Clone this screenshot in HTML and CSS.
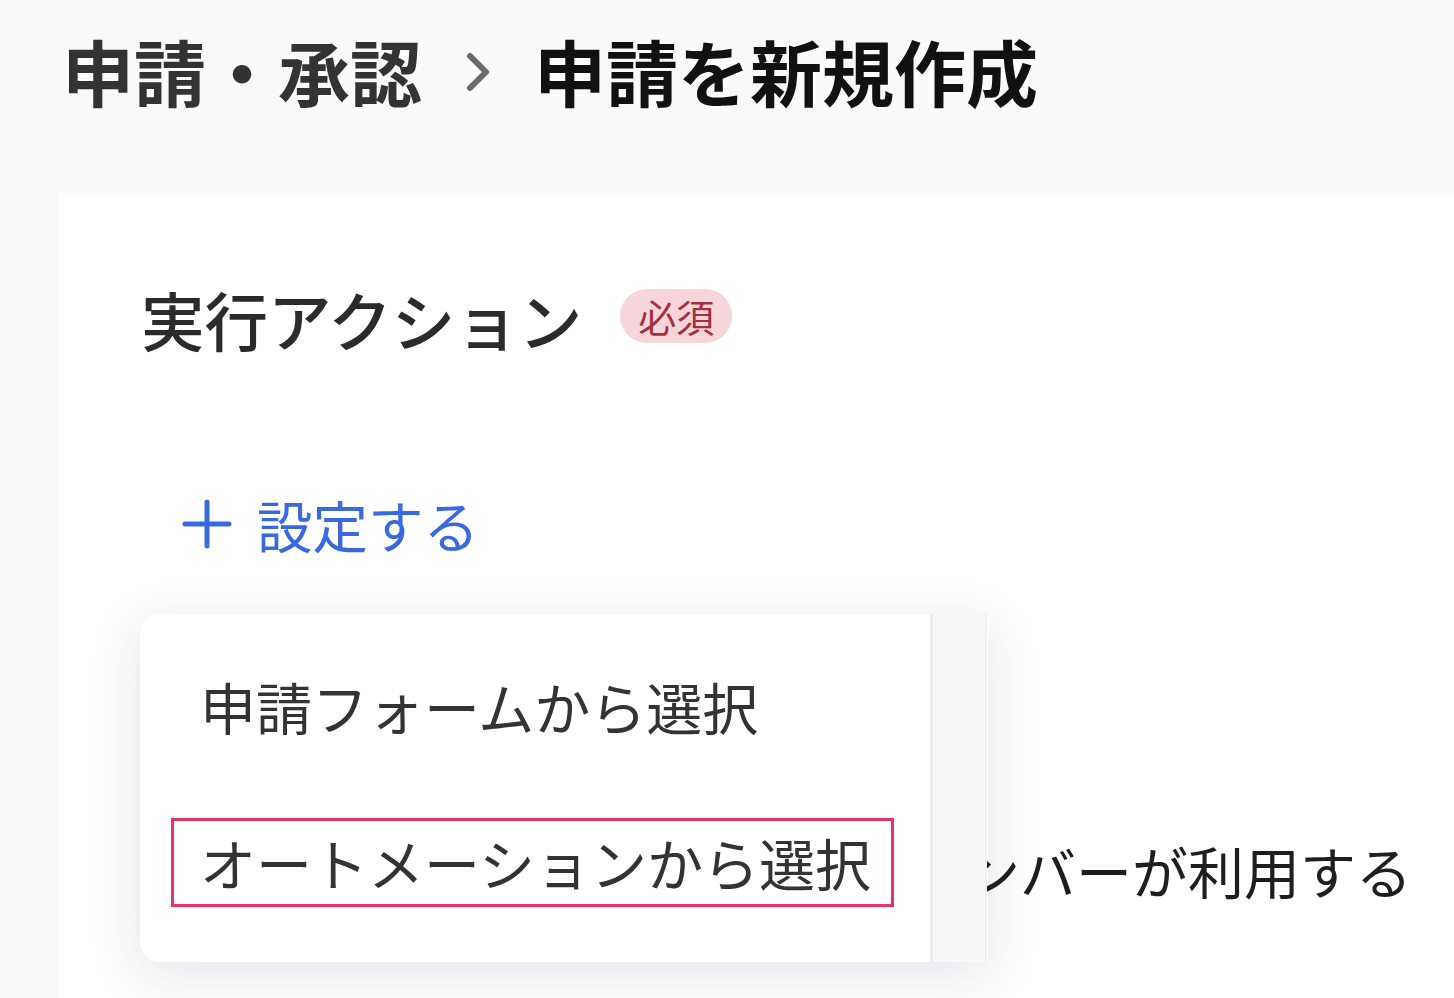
FILE: index.html
```html
<!DOCTYPE html>
<html lang="ja">
<head>
<meta charset="utf-8">
<title>申請を新規作成</title>
<link rel="stylesheet" href="styles.css">
</head>
<body>
<header class="page-header">
  <nav class="breadcrumb">
    <span class="crumb-parent">申請・承認</span>
    <svg class="crumb-sep" width="26" height="42" viewBox="0 0 26 42"><path d="M5 5 L21 21 L5 37" fill="none" stroke="#6b6b6b" stroke-width="6" stroke-linecap="round" stroke-linejoin="round"/></svg>
    <span class="crumb-current">申請を新規作成</span>
  </nav>
</header>
<main class="card">
  <div class="field-head">
    <h2 class="field-title">実行アクション</h2>
    <span class="badge">必須</span>
  </div>
  <button class="add-btn" type="button">
    <svg class="add-icon" width="50" height="50" viewBox="0 0 50 50"><path d="M25 3 V47 M3 25 H47" fill="none" stroke="#3a68e3" stroke-width="5" stroke-linecap="round"/></svg>
    <span>設定する</span>
  </button>
  <p class="under-text">この操作はほかのメンバーが利用する</p>
  <div class="dropdown">
    <ul class="menu">
      <li class="menu-item">申請フォームから選択</li>
      <li class="menu-item menu-item-marked">オートメーションから選択</li>
    </ul>
    <div class="scroll-track"></div>
  </div>
</main>
</body>
</html>
```
FILE: styles.css
```css
html, body {
  margin: 0;
  padding: 0;
  height: 100%;
}
body {
  background: #fafafa;
  font-family: "Noto Sans CJK JP", "Noto Sans", sans-serif;
  color: #333;
  overflow: hidden;
}
.page-header {
  height: 193px;
  box-sizing: border-box;
  padding: 34px 0 0 62px;
}
.breadcrumb {
  display: flex;
  align-items: center;
  gap: 43px;
  font-size: 72px;
  line-height: 1;
  font-weight: 700;
}
.crumb-parent {
  color: #333;
}
.crumb-current {
  color: #111;
}
.crumb-sep {
  margin-top: 4px;
}
.card {
  position: relative;
  margin-left: 59px;
  background: #fff;
  height: calc(100% - 193px);
  box-sizing: border-box;
  padding: 94px 0 0 82px;
}
.field-head {
  display: flex;
  align-items: center;
  gap: 38px;
}
.field-title {
  margin: 0;
  font-size: 63.5px;
  line-height: 1;
  font-weight: 500;
  color: #2b2b2b;
}
.badge {
  display: inline-block;
  height: 54px;
  line-height: 54px;
  padding: 0 18px;
  border-radius: 27px;
  background: #f6d6da;
  color: #a4303d;
  font-size: 38px;
  margin-top: -6px;
}
.add-btn {
  display: flex;
  align-items: center;
  gap: 25px;
  margin: 146px 0 0 41px;
  padding: 0;
  border: 0;
  background: none;
  font-family: inherit;
  font-size: 55.5px;
  line-height: 1;
  color: #3a68e3;
}
.under-text {
  margin: 290px 0 0 0;
  padding-left: 319px;
  font-size: 56px;
  line-height: 1;
  color: #1e1e1e;
  white-space: nowrap;
}
.dropdown {
  position: absolute;
  left: 81px;
  top: 421px;
  width: 848px;
  height: 348px;
  display: flex;
  box-shadow: 0 12px 52px rgba(60, 60, 100, 0.14);
  border-radius: 20px 0 0 20px;
}
.menu {
  list-style: none;
  margin: 0;
  padding: 48px 36px 0 31px;
  width: 790px;
  box-sizing: border-box;
  background: #fff;
  border-radius: 20px;
}
.menu-item {
  font-size: 56px;
  line-height: 1;
  color: #333;
  padding: 13px 20px 14px 26px;
  border: 3px solid transparent;
  white-space: nowrap;
}
.menu-item + .menu-item {
  margin-top: 67px;
}
.menu-item-marked {
  border-color: #e8345f;
}
.scroll-track {
  width: 52px;
  background: #f8f8f8;
  border-left: 3px solid #ececec;
  border-right: 2px solid #efefef;
}
```
